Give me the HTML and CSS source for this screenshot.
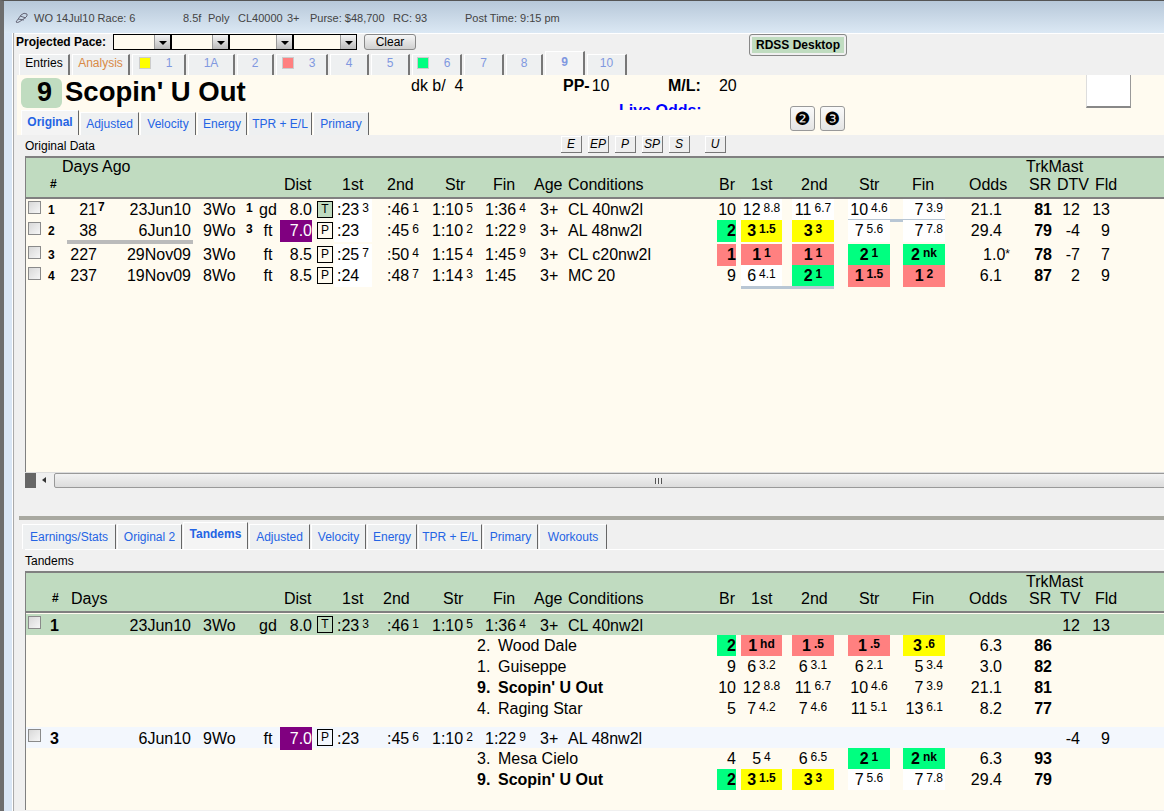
FILE: index.html
```html
<!DOCTYPE html>
<html lang="en">
<head>
	<meta charset="UTF-8">
	<title>Scopin' U Out</title>
	<link rel="stylesheet" href="styles.css">
</head>
<body>
<div class="window">
	<div class="titlebar">
		<svg class="logo" width="14" height="12" viewBox="0 0 14 12"><path d="M1 10 L6 3 Q9 0 12 2 Q13 4 10 6 L4 10 Q2 11 1 10 M3 7 L9 8 M5 4 L11 6" fill="none" stroke="#667" stroke-width="1"/></svg>
		<span class="t-race">WO 14Jul10 Race: 6</span>
		<span class="t-dist">8.5f</span>
		<span class="t-surf">Poly</span>
		<span class="t-class">CL40000</span>
		<span class="t-age">3+</span>
		<span class="t-purse">Purse: $48,700</span>
		<span class="t-rc">RC: 93</span>
		<span class="t-post">Post Time: 9:15 pm</span>
	</div>
	<div class="content">
		<div class="rail"></div>
		<div class="main">
			<div class="toolbar">
				<strong class="pace-label">Projected Pace:</strong>
				<span class="combo"><i></i></span>
				<span class="combo"><i></i></span>
				<span class="combo wide"><i></i></span>
				<span class="combo wide"><i></i></span>
				<button class="clear">Clear</button>
				<button class="rdss">RDSS Desktop</button>
			</div>
			<div class="racetabs">
				<div class="tab plain">Entries</div>
				<div class="tab orange">Analysis</div>
				<div class="tab"><span class="swatch yel"></span>1</div>
				<div class="tab">1A</div>
				<div class="tab">2</div>
				<div class="tab"><span class="swatch red"></span>3</div>
				<div class="tab">4</div>
				<div class="tab">5</div>
				<div class="tab"><span class="swatch grn"></span>6</div>
				<div class="tab">7</div>
				<div class="tab">8</div>
				<div class="tab active">9</div>
				<div class="tab">10</div>
			</div>
			<div class="horse">
				<div class="nameline">
					<div class="saddle">9</div>
					<div class="name">Scopin' U Out</div>
					<div class="color">dk b/&nbsp; 4</div>
					<div class="pp"><b>PP-</b>10</div>
					<div class="ml"><b>M/L:</b><span>20</span></div>
					<div class="live">Live Odds:</div>
				</div>
				<div class="subtabs upper-tabs">
					<div class="tab active">Original</div>
					<div class="tab">Adjusted</div>
					<div class="tab">Velocity</div>
					<div class="tab">Energy</div>
					<div class="tab">TPR + E/L</div>
					<div class="tab">Primary</div>
				</div>
				<div class="circles">
					<button>❷</button>
					<button>❸</button>
				</div>
				<div class="silk"></div>
			</div>
			<div class="strip">
				<span>Original Data</span>
				<div class="styles">
					<button>E</button><button>EP</button><button>P</button><button>SP</button><button>S</button><button class="u">U</button>
				</div>
			</div>

			<div class="table upper">
				<div class="head">
					<span class="h-days top">Days Ago</span>
					<span class="h-sr top trk">TrkMast</span>
					<span class="h-num low">#</span>
					<span class="h-dist low">Dist</span>
					<span class="h-f1 low">1st</span>
					<span class="h-f2 low">2nd</span>
					<span class="h-f3 low">Str</span>
					<span class="h-f4 low">Fin</span>
					<span class="h-age low">Age</span>
					<span class="h-cond low">Conditions</span>
					<span class="h-br low">Br</span>
					<span class="h-c1 low">1st</span>
					<span class="h-c2 low">2nd</span>
					<span class="h-c3 low">Str</span>
					<span class="h-c4 low">Fin</span>
					<span class="h-odds low">Odds</span>
					<span class="h-sr low">SR</span>
					<span class="h-tv low">DTV</span>
					<span class="h-fld low">Fld</span>
				</div>
				<div class="rows upper-rows">
					<div class="row">
						<span class="c-chk"><i class="check"></i></span><span class="c-num">1</span><span class="c-days">21</span><span class="c-dsup">7</span><span class="c-date">23Jun10</span><span class="c-trk">3Wo</span><span class="c-mark">1</span><span class="c-surf">gd</span><span class="c-dist">8.0</span><span class="c-tag"><em class="tag turf">T</em></span>
						<span class="c-f1">:23<sup>3</sup></span><span class="c-f2">:46<sup>1</sup></span><span class="c-f3">1:10<sup>5</sup></span><span class="c-f4">1:36<sup>4</sup></span><span class="c-age">3+</span><span class="c-cond">CL 40nw2l</span>
						<span class="c-br">10</span><span class="c-c1 wht">12<sup>8.8</sup></span><span class="c-c2 wht">11<sup>6.7</sup></span><span class="c-c3 wht">10<sup>4.6</sup></span><span class="c-c4 wht rt">7<sup>3.9</sup></span>
						<span class="c-odds">21.1</span><b class="c-sr">81</b><span class="c-tv">12</span><span class="c-fld">13</span>
						<i class="bar bar-fin"></i>
					</div>
					<div class="row gap">
						<span class="c-chk"><i class="check"></i></span><span class="c-num">2</span><span class="c-days">38</span><span class="c-date">6Jun10</span><span class="c-trk">9Wo</span><span class="c-mark">3</span><span class="c-surf">ft</span><span class="c-dist purple">7.0</span><span class="c-tag"><em class="tag">P</em></span>
						<span class="c-f1">:23</span><span class="c-f2">:45<sup>6</sup></span><span class="c-f3">1:10<sup>2</sup></span><span class="c-f4">1:22<sup>9</sup></span><span class="c-age">3+</span><span class="c-cond">AL 48nw2l</span>
						<span class="c-br grn">2</span><span class="c-c1 yel">3<sup>1.5</sup></span><span class="c-c2 yel">3<sup>3</sup></span><span class="c-c3 wht">7<sup>5.6</sup></span><span class="c-c4 wht rt">7<sup>7.8</sup></span>
						<span class="c-odds">29.4</span><b class="c-sr">79</b><span class="c-tv">-4</span><span class="c-fld">9</span>
						<i class="bar bar-days"></i>
					</div>
					<div class="row">
						<span class="c-chk"><i class="check"></i></span><span class="c-num">3</span><span class="c-days">227</span><span class="c-date">29Nov09</span><span class="c-trk">3Wo</span><span class="c-surf">ft</span><span class="c-dist">8.5</span><span class="c-tag"><em class="tag">P</em></span>
						<span class="c-f1">:25<sup>7</sup></span><span class="c-f2">:50<sup>4</sup></span><span class="c-f3">1:15<sup>4</sup></span><span class="c-f4">1:45<sup>9</sup></span><span class="c-age">3+</span><span class="c-cond">CL c20nw2l</span>
						<span class="c-br red">1</span><span class="c-c1 red">1<sup>1</sup></span><span class="c-c2 red">1<sup>1</sup></span><span class="c-c3 grn">2<sup>1</sup></span><span class="c-c4 grn">2<sup>nk</sup></span>
						<span class="c-odds star">1.0<small>*</small></span><b class="c-sr">78</b><span class="c-tv">-7</span><span class="c-fld">7</span>
					</div>
					<div class="row">
						<span class="c-chk"><i class="check"></i></span><span class="c-num">4</span><span class="c-days">237</span><span class="c-date">19Nov09</span><span class="c-trk">8Wo</span><span class="c-surf">ft</span><span class="c-dist">8.5</span><span class="c-tag"><em class="tag">P</em></span>
						<span class="c-f1">:24</span><span class="c-f2">:48<sup>7</sup></span><span class="c-f3">1:14<sup>3</sup></span><span class="c-f4">1:45</span><span class="c-age">3+</span><span class="c-cond">MC 20</span>
						<span class="c-br">9</span><span class="c-c1 wht">6<sup>4.1</sup></span><span class="c-c2 grn">2<sup>1</sup></span><span class="c-c3 red">1<sup>1.5</sup></span><span class="c-c4 red">1<sup>2</sup></span>
						<span class="c-odds">6.1</span><b class="c-sr">87</b><span class="c-tv">2</span><span class="c-fld">9</span>
						<i class="bar bar-first"></i>
					</div>
				</div>
			</div>
			<div class="scrollbar">
				<span class="sb-end"></span>
				<span class="sb-arrow"><i></i></span>
				<span class="sb-thumb"><i></i></span>
			</div>
			<div class="spacer"></div>
			<div class="splitter"></div>

			<div class="subtabs lower-tabs">
				<div class="tab">Earnings/Stats</div>
				<div class="tab">Original 2</div>
				<div class="tab active">Tandems</div>
				<div class="tab">Adjusted</div>
				<div class="tab">Velocity</div>
				<div class="tab">Energy</div>
				<div class="tab">TPR + E/L</div>
				<div class="tab">Primary</div>
				<div class="tab">Workouts</div>
			</div>
			<div class="strip lower-strip"><span>Tandems</span></div>

			<div class="table lower">
				<div class="head">
					<span class="h-sr top trk">TrkMast</span>
					<span class="h-num low">#</span>
					<span class="h-days low">Days</span>
					<span class="h-dist low">Dist</span>
					<span class="h-f1 low">1st</span>
					<span class="h-f2 low">2nd</span>
					<span class="h-f3 low">Str</span>
					<span class="h-f4 low">Fin</span>
					<span class="h-age low">Age</span>
					<span class="h-cond low">Conditions</span>
					<span class="h-br low">Br</span>
					<span class="h-c1 low">1st</span>
					<span class="h-c2 low">2nd</span>
					<span class="h-c3 low">Str</span>
					<span class="h-c4 low">Fin</span>
					<span class="h-odds low">Odds</span>
					<span class="h-sr low">SR</span>
					<span class="h-tv low">TV</span>
					<span class="h-fld low">Fld</span>
				</div>
				<div class="rows lower-rows">
					<div class="row tint-green">
						<span class="c-chk"><i class="check"></i></span><b class="c-num big">1</b><span class="c-date">23Jun10</span><span class="c-trk">3Wo</span><span class="c-surf">gd</span><span class="c-dist">8.0</span><span class="c-tag"><em class="tag">T</em></span>
						<span class="c-f1">:23<sup>3</sup></span><span class="c-f2">:46<sup>1</sup></span><span class="c-f3">1:10<sup>5</sup></span><span class="c-f4">1:36<sup>4</sup></span><span class="c-age">3+</span><span class="c-cond">CL 40nw2l</span>
						<span class="c-tv">12</span><span class="c-fld">13</span>
					</div>
					<div class="row">
						<span class="c-horse"><span>2.</span>Wood Dale</span>
						<span class="c-br grn">2</span><span class="c-c1 red">1<sup>hd</sup></span><span class="c-c2 red">1<sup>.5</sup></span><span class="c-c3 red">1<sup>.5</sup></span><span class="c-c4 yel">3<sup>.6</sup></span>
						<span class="c-odds">6.3</span><b class="c-sr">86</b>
					</div>
					<div class="row">
						<span class="c-horse"><span>1.</span>Guiseppe</span>
						<span class="c-br">9</span><span class="c-c1">6<sup>3.2</sup></span><span class="c-c2">6<sup>3.1</sup></span><span class="c-c3">6<sup>2.1</sup></span><span class="c-c4 rt">5<sup>3.4</sup></span>
						<span class="c-odds">3.0</span><b class="c-sr">82</b>
					</div>
					<div class="row">
						<b class="c-horse"><span>9.</span>Scopin' U Out</b>
						<span class="c-br">10</span><span class="c-c1">12<sup>8.8</sup></span><span class="c-c2">11<sup>6.7</sup></span><span class="c-c3">10<sup>4.6</sup></span><span class="c-c4 rt">7<sup>3.9</sup></span>
						<span class="c-odds">21.1</span><b class="c-sr">81</b>
					</div>
					<div class="row">
						<span class="c-horse"><span>4.</span>Raging Star</span>
						<span class="c-br">5</span><span class="c-c1">7<sup>4.2</sup></span><span class="c-c2">7<sup>4.6</sup></span><span class="c-c3">11<sup>5.1</sup></span><span class="c-c4 rt">13<sup>6.1</sup></span>
						<span class="c-odds">8.2</span><b class="c-sr">77</b>
					</div>
					<div class="row tint-blue">
						<span class="c-chk"><i class="check"></i></span><b class="c-num big">3</b><span class="c-date">6Jun10</span><span class="c-trk">9Wo</span><span class="c-surf">ft</span><span class="c-dist purple">7.0</span><span class="c-tag"><em class="tag">P</em></span>
						<span class="c-f1">:23</span><span class="c-f2">:45<sup>6</sup></span><span class="c-f3">1:10<sup>2</sup></span><span class="c-f4">1:22<sup>9</sup></span><span class="c-age">3+</span><span class="c-cond">AL 48nw2l</span>
						<span class="c-tv">-4</span><span class="c-fld">9</span>
					</div>
					<div class="row">
						<span class="c-horse"><span>3.</span>Mesa Cielo</span>
						<span class="c-br">4</span><span class="c-c1">5<sup>4</sup></span><span class="c-c2">6<sup>6.5</sup></span><span class="c-c3 grn">2<sup>1</sup></span><span class="c-c4 grn">2<sup>nk</sup></span>
						<span class="c-odds">6.3</span><b class="c-sr">93</b>
					</div>
					<div class="row">
						<b class="c-horse"><span>9.</span>Scopin' U Out</b>
						<span class="c-br grn">2</span><span class="c-c1 yel">3<sup>1.5</sup></span><span class="c-c2 yel">3<sup>3</sup></span><span class="c-c3 wht">7<sup>5.6</sup></span><span class="c-c4 wht rt">7<sup>7.8</sup></span>
						<span class="c-odds">29.4</span><b class="c-sr">79</b>
					</div>
				</div>
			</div>
		</div>
	</div>
</div>
</body>
</html>
```

FILE: styles.css
```css
* {
	box-sizing: border-box;
}

html, body {
	margin: 0;
	padding: 0;
}

body {
	width: 1164px;
	height: 811px;
	overflow: hidden;
	font-family: "Liberation Sans", Arial, sans-serif;
	font-size: 16px;
	color: #000;
	background-color: #d9e6f5;
}

button {
	font-family: inherit;
	padding: 0;
}

.window {
	height: 811px;
	border-left: 4px solid #6d6d6d;
	border-top: 1px solid #555;
	display: flex;
	flex-direction: column;
}

/* title bar */
.titlebar {
	flex: none;
	height: 32px;
	display: flex;
	align-items: center;
	padding-top: 2px;
	font-size: 11px;
	color: #444;
	background: linear-gradient(#b7c8d9, #dbe8f4);
}

.logo {
	margin-left: 11px;
	margin-right: 5px;
}

.t-race { width: 149px; }
.t-dist { width: 25px; }
.t-surf { width: 30px; }
.t-class { width: 49px; }
.t-age { width: 23px; }
.t-purse { width: 83px; }
.t-rc { width: 72px; }

.content {
	flex: 1;
	display: flex;
	min-height: 0;
}

.rail {
	flex: none;
	width: 11px;
	background: linear-gradient(90deg, #d9e6f5 8px, #fff 8px, #fff 9px, #aaa 9px, #aaa 10px, #eee 10px);
}

.main {
	flex: 1;
	min-width: 0;
	display: flex;
	flex-direction: column;
	background-color: #f0f0f0;
}

/* projected pace row */
.toolbar {
	flex: none;
	height: 18px;
	position: relative;
	display: flex;
	align-items: flex-start;
	border-top: 1px solid #fff;
	padding-left: 1px;
}

.pace-label {
	font-size: 12px;
	line-height: 15px;
	margin-top: 1px;
	width: 97px;
}

.combo {
	width: 58px;
	height: 16px;
	border: 1px solid #000;
	background-color: #fffbf0;
	display: flex;
	justify-content: flex-end;
}

.combo.wide {
	width: 64px;
}

.combo i {
	width: 16px;
	height: 14px;
	background: linear-gradient(#f4f4f4, #bbb);
	border-left: 1px solid #999;
	position: relative;
}

.combo i:after {
	content: '';
	position: absolute;
	left: 4px;
	top: 6px;
	border: 4px solid transparent;
	border-top-color: #000;
	border-bottom: 0;
}

.clear {
	width: 52px;
	height: 16px;
	margin-left: 7px;
	font-size: 12px;
	line-height: 14px;
	border: 1px solid #888;
	border-radius: 3px;
	background: linear-gradient(#f6f6f6, #d0d0d0);
	color: #000;
}

.rdss {
	position: absolute;
	left: 734px;
	top: 0;
	width: 98px;
	height: 22px;
	font-size: 12px;
	font-weight: bold;
	border: 1px solid #888;
	border-radius: 3px;
	background-color: #c0dcc0;
	box-shadow: inset 0 0 0 2px #f0f0f0;
	color: #000;
}

/* tabs */
.tab {
	display: flex;
	align-items: center;
	justify-content: center;
	font-size: 12px;
	background-color: #eef0f1;
	border-top: 1px solid #fff;
	border-right: 2px solid #777;
	border-left: 1px solid #fff;
	white-space: nowrap;
}

.racetabs {
	flex: none;
	height: 24px;
	display: grid;
	grid-template-columns: 51px 58px 54px 47px 37px 52px 39px 39px 50px 40px 37px 40px 40px;
	column-gap: 2px;
	margin-left: 4px;
	color: #8098e0;
}

.racetabs .tab {
	margin-top: 3px;
	height: 21px;
	padding-bottom: 4px;
}

.racetabs .tab.active {
	margin-top: 0;
	height: 24px;
	background-color: #f4f4f4;
	font-weight: bold;
	align-items: flex-start;
	padding-top: 3px;
}

.racetabs .plain {
	color: #000;
}

.racetabs .orange {
	color: #d98a45;
}

.swatch {
	width: 12px;
	height: 12px;
	border: 1px solid #ccc;
	margin-right: 15px;
	margin-left: -6px;
}

/* horse header */
.horse {
	flex: none;
	height: 60px;
	position: relative;
	margin-left: 2px;
	background-color: #fffbf0;
}

.nameline {
	height: 35px;
	overflow: hidden;
	position: relative;
	display: grid;
	grid-template-columns: 4px 41px 3px 346px 152px 105px 50px 100px;
	grid-template-rows: 20px 20px;
}

.saddle {
	grid-column: 2;
	grid-row: 1 / 3;
	height: 30px;
	margin-top: 3px;
	padding-right: 10px;
	text-align: right;
	font-size: 27px;
	font-weight: bold;
	line-height: 28px;
	border-radius: 6px;
	background-color: #c0dcc0;
}

.name {
	grid-column: 4;
	grid-row: 1 / 3;
	font-size: 27.5px;
	font-weight: bold;
	line-height: 32px;
	padding-top: 1px;
}

.color {
	grid-column: 5;
	line-height: 22px;
}

.pp {
	grid-column: 6;
	line-height: 22px;
}

.pp b {
	margin-right: 2px;
}

.ml {
	grid-column: 7 / 9;
	line-height: 22px;
	white-space: nowrap;
}

.ml b {
	margin-right: 18px;
}

.live {
	grid-column: 6 / 8;
	grid-row: 2;
	padding-left: 56px;
	margin-top: 6px;
	font-weight: bold;
	color: #00f;
	line-height: 20px;
	white-space: nowrap;
}

.subtabs {
	display: grid;
	column-gap: 1px;
}

.upper-tabs {
	height: 25px;
	margin-left: 4px;
	grid-template-columns: 58px 59px 56px 50px 64px 56px;
	color: #2060e0;
}

.subtabs .tab {
	color: #2464e4;
	margin-top: 2px;
	border-right-width: 1px;
	border-right-color: #666;
}

.subtabs .tab.active {
	margin-top: 0;
	background-color: #f4f4f4;
	font-weight: bold;
	align-items: flex-start;
	padding-top: 4px;
}

.circles {
	position: absolute;
	left: 773px;
	top: 31px;
	display: flex;
	gap: 5px;
}

.circles button {
	width: 25px;
	height: 25px;
	font-family: "DejaVu Sans", sans-serif;
	font-size: 18px;
	line-height: 22px;
	border: 1px solid #999;
	border-radius: 3px;
	background: linear-gradient(#fafafa, #e4e4e4);
	color: #000;
}

.silk {
	position: absolute;
	left: 1069px;
	top: 0;
	width: 45px;
	height: 33px;
	background-color: #fff;
	border-right: 1px solid #999;
	border-left: 1px solid #ddd;
	border-bottom: 2px solid #888;
}

/* strip above the grids */
.strip {
	flex: none;
	height: 21px;
	margin-left: 10px;
	display: flex;
	align-items: center;
	font-size: 12px;
	position: relative;
}

.styles {
	position: absolute;
	left: 536px;
	top: 1px;
	display: flex;
	gap: 6px;
}

.styles button {
	width: 21px;
	height: 17px;
	font-size: 12px;
	font-style: italic;
	line-height: 15px;
	border: 0;
	border-right: 1px solid #777;
	border-bottom: 1px solid #777;
	background-color: #eee;
	box-shadow: inset 1px 1px 0 #fff;
	color: #000;
}

.styles .u {
	margin-left: 9px;
}

.lower-strip {
	height: 22px;
	border-top: 1px solid #fff;
}

/* the two grids */
.table {
	flex: none;
	margin-left: 10px;
	border-left: 1px solid #808080;
}

.head {
	display: grid;
	padding-left: 24px;
	background-color: #c0dbc0;
	border-top: 2px solid #808080;
	border-bottom: 2px solid #808080;
	grid-template-rows: 18px 18px;
	height: 43px;
	grid-template-columns:
		[num] 12px [days] 222px [dist] 58px [f1] 45px [f2] 58px [f3] 48px [f4] 41px [age] 34px
		[cond] 151px [br] 32px [c1] 50px [c2] 58px [c3] 53px [c4] 57px [odds] 60px [sr] 28px [tv] 38px [fld] 40px;
}

.lower .head {
	height: 42px;
	grid-template-rows: 17px 17px;
	grid-template-columns:
		[num] 12px [days] 222px [dist] 58px [f1] 41px [f2] 60px [f3] 50px [f4] 41px [age] 34px
		[cond] 151px [br] 32px [c1] 50px [c2] 58px [c3] 53px [c4] 57px [odds] 60px [sr] 31px [tv] 35px [fld] 40px;
}

.head span {
	white-space: nowrap;
	line-height: 17px;
}

.head .top { grid-row: 1; }
.head .low { grid-row: 2; }

.head .trk {
	margin-left: -3px;
}

.head .h-num {
	font-size: 12px;
	font-weight: bold;
}

.h-num { grid-column: num; }
.h-days { grid-column: days; }
.h-dist { grid-column: dist; }
.h-f1 { grid-column: f1; }
.h-f2 { grid-column: f2; }
.h-f3 { grid-column: f3; }
.h-f4 { grid-column: f4; }
.h-age { grid-column: age; }
.h-cond { grid-column: cond; }
.h-br { grid-column: br; }
.h-c1 { grid-column: c1; }
.h-c2 { grid-column: c2; }
.h-c3 { grid-column: c3; }
.h-c4 { grid-column: c4; }
.h-odds { grid-column: odds; }
.h-sr { grid-column: sr; }
.h-tv { grid-column: tv; }
.h-fld { grid-column: fld; }

.lower .h-num {
	margin-left: 2px;
}

.lower .h-days {
	padding-left: 9px;
}

.rows {
	background-color: #fffbf0;
}

.upper-rows {
	height: 273px;
}

.lower-rows {
	height: 197px;
	padding-top: 1px;
}

.row {
	display: grid;
	height: 21px;
	line-height: 21px;
	white-space: nowrap;
	grid-template-columns:
		[chk] 19px [num] 15px [days] 37px [dsup] 11px [date] 83px [trk] 54px [mark] 14px [surf] 21px
		[dist] 32px [tag] 22px [f1] 38px [f2] 53px [f3] 53px [f4] 55px [age] 35px [cond] 149px
		[br] 19px 5px [c1] 41px 10px [c2] 42px 14px [c3] 42px 13px [c4] 42px
		[odds] 57px [sr] 50px [tv] 28px [fld] 30px;
}

.row > * {
	grid-row: 1;
}

.row.gap {
	margin-bottom: 3px;
}

.tint-green {
	background-color: #c0dbc0;
	line-height: 23px;
}

.tint-blue {
	background-color: #f3f7fd;
	margin-top: 8px;
	line-height: 23px;
}

.c-chk { grid-column: chk; }
.c-num { grid-column: num; font-size: 12px; font-weight: bold; padding-left: 3px; padding-top: 1px; }
.c-days { grid-column: days; text-align: right; }
.c-dsup { grid-column: dsup; font-size: 12px; font-weight: bold; padding-left: 1px; line-height: 17px; }
.c-date { grid-column: date; text-align: right; }
.c-trk { grid-column: trk; padding-left: 12px; }
.c-mark { grid-column: mark; font-size: 12px; font-weight: bold; line-height: 19px; padding-left: 1px; }
.c-surf { grid-column: surf; text-align: center; padding-right: 3px; }
.c-dist { grid-column: dist; text-align: right; }
.c-tag { grid-column: tag; padding-left: 5px; }
.c-f1 { grid-column: f1; padding-left: 3px; }
.c-f2 { grid-column: f2; padding-left: 15px; }
.c-f3 { grid-column: f3; padding-left: 7px; }
.c-f4 { grid-column: f4; padding-left: 7px; }
.c-age { grid-column: age; padding-left: 7px; }
.c-cond { grid-column: cond; }
.c-br { grid-column: br; text-align: right; }
.c-c1 { grid-column: c1; text-align: center; }
.c-c2 { grid-column: c2; text-align: center; }
.c-c3 { grid-column: c3; text-align: center; }
.c-c4 { grid-column: c4; text-align: center; }
.c-odds { grid-column: odds; text-align: right; }
.c-sr { grid-column: sr; text-align: right; }
.c-tv { grid-column: tv; text-align: right; }
.c-fld { grid-column: fld; text-align: right; }

.c-horse {
	grid-column: f4 / br;
	margin-left: -1px;
}

.c-horse span {
	display: inline-block;
	width: 21px;
}

.c-num.big {
	font-size: 16px;
	padding-left: 5px;
	padding-top: 0;
}

.upper .c-f1 {
	background-color: #fff;
}

sup {
	font-size: 12px;
	line-height: 0;
	vertical-align: 3px;
	margin-left: 3px;
}

.check {
	display: block;
	width: 13px;
	height: 13px;
	margin: 2px 0 0 2px;
	border: 1px solid #8a8a8a;
	background: linear-gradient(135deg, #d8d8d8, #f6f6f6);
}

.tag {
	display: block;
	width: 16px;
	height: 17px;
	margin-top: 2px;
	border: 1px solid #000;
	font-size: 12px;
	font-style: normal;
	line-height: 15px;
	text-align: center;
}

.tag.turf {
	background-color: #c0dbc0;
}

.purple {
	background-color: #800080;
	color: #fff;
}

.red, .yel, .grn {
	font-weight: bold;
}

.red { background-color: #ff8080; }
.yel { background-color: #ffff00; }
.grn { background-color: #00ff80; }
.wht { background-color: #fff; }

.rt {
	text-align: right;
	padding-right: 2px;
}

.star small {
	font-size: 12px;
	margin-right: -8px;
	vertical-align: 2px;
}

.bar {
	align-self: end;
	display: block;
}

.bar-days {
	grid-column: days / trk;
	margin-left: 7px;
	margin-right: -2px;
	height: 4px;
	margin-bottom: -2px;
	background-color: #bbb;
}

.bar-fin {
	grid-column: c3 / odds;
	height: 3px;
	margin-bottom: -1px;
	background-color: #b8c6d4;
}

.bar-first {
	grid-column: c1 / c3;
	margin-right: 14px;
	height: 3px;
	margin-bottom: -2px;
	background-color: #b8c6d4;
}

/* scrollbar */
.scrollbar {
	flex: none;
	height: 16px;
	margin-left: 10px;
	display: flex;
	overflow: hidden;
	background-color: #f0f0f0;
	border-top: 1px solid #ddd;
}

.sb-end {
	flex: none;
	width: 11px;
	background-color: #666;
}

.sb-arrow {
	flex: none;
	width: 18px;
	position: relative;
	background-color: #f0f0f0;
}

.sb-arrow i {
	position: absolute;
	left: 6px;
	top: 4px;
	border: 3px solid transparent;
	border-right: 4px solid #333;
	border-left: 0;
}

.sb-thumb {
	flex: none;
	width: 1208px;
	position: relative;
	border: 1px solid #999;
	border-radius: 2px;
	background: linear-gradient(#f2f2f2, #dcdcdc);
}

.sb-thumb i {
	position: absolute;
	left: 600px;
	top: 4px;
	width: 7px;
	height: 6px;
	background: repeating-linear-gradient(90deg, #555 0, #555 1px, #eee 1px, #eee 3px);
}

.spacer {
	flex: none;
	height: 28px;
}

.splitter {
	flex: none;
	height: 4px;
	margin-left: 4px;
	background-color: #a8a8a0;
}

.lower-tabs {
	flex: none;
	height: 27px;
	margin-top: 2px;
	margin-left: 7px;
	grid-template-columns: 94px 65px 65px 61px 55px 50px 64px 55px 68px;
}
```
